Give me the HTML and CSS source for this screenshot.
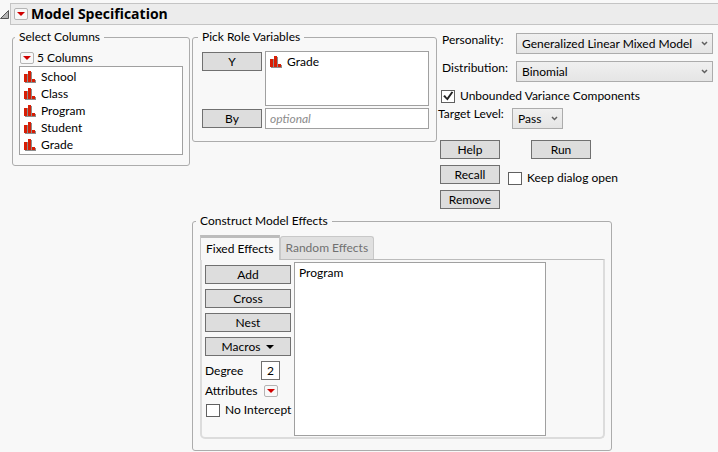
FILE: index.html
```html
<!DOCTYPE html>
<html lang="en">
<head>
    <meta charset="UTF-8">
    <meta name="viewport" content="width=device-width, initial-scale=1.0">
    <title>Model Specification</title>
    <link rel="stylesheet" href="styles.css">
</head>
<body>

<!-- Shared icons -->
<svg class="icon-defs" aria-hidden="true">
    <symbol id="nominal" viewBox="0 0 12 12">
        <path fill="#8c8c8c" d="M1 3h3v8H1zM5 1h3v11H5zM9 9h3v3H9zM1 11h11v1H1z"/>
        <path fill="#d81e05" d="M0 3h3v8H0zM4 0h3v11H4zM8 8h3v3H8z"/>
    </symbol>
    <symbol id="triangle" viewBox="0 0 8 4">
        <path d="M0 0h8L4 4z"/>
    </symbol>
    <symbol id="chevron" viewBox="0 0 7 5">
        <path fill="none" stroke="#606060" stroke-width="1.5" d="M1 1l2.500 2.500L6 1"/>
    </symbol>
</svg>

<header class="title-bar">
    <svg class="disclosure" viewBox="0 0 9 9"><path fill="#b4b4b4" stroke="#555" d="M8.500 .5v8h-8z"/></svg>
    <div class="title">
        <button class="menu-btn" aria-label="Model options"><svg><use href="#triangle"/></svg></button>
        <h1>Model Specification</h1>
    </div>
</header>

<main class="dialog">
    <fieldset class="group columns">
        <legend>Select Columns</legend>
        <div class="columns-head">
            <button class="menu-btn" aria-label="Column options"><svg><use href="#triangle"/></svg></button>
            <span>5 Columns</span>
        </div>
        <ul class="list">
            <li><svg><use href="#nominal"/></svg>School</li>
            <li><svg><use href="#nominal"/></svg>Class</li>
            <li><svg><use href="#nominal"/></svg>Program</li>
            <li><svg><use href="#nominal"/></svg>Student</li>
            <li><svg><use href="#nominal"/></svg>Grade</li>
        </ul>
    </fieldset>

    <div class="workspace">
        <div class="top-row">
            <fieldset class="group roles">
                <legend>Pick Role Variables</legend>
                <button class="btn">Y</button>
                <ul class="list">
                    <li><svg><use href="#nominal"/></svg>Grade</li>
                </ul>
                <button class="btn by-btn">By</button>
                <input class="by-input" type="text" placeholder="optional" aria-label="By">
            </fieldset>

            <div class="options">
                <div class="settings">
                    <label for="personality">Personality:</label>
                    <div class="select">
                        <select id="personality"><option>Generalized Linear Mixed Model</option></select>
                        <svg><use href="#chevron"/></svg>
                    </div>
                    <label for="distribution">Distribution:</label>
                    <div class="select">
                        <select id="distribution"><option>Binomial</option></select>
                        <svg><use href="#chevron"/></svg>
                    </div>
                </div>
                <label class="check unbounded"><input type="checkbox" checked>Unbounded Variance Components</label>
                <div class="target">
                    <label for="target">Target Level:</label>
                    <div class="select">
                        <select id="target"><option>Pass</option></select>
                        <svg><use href="#chevron"/></svg>
                    </div>
                </div>
                <div class="actions">
                    <div class="action-col">
                        <button class="btn">Help</button>
                        <button class="btn">Recall</button>
                        <button class="btn">Remove</button>
                    </div>
                    <div class="run-col">
                        <button class="btn run">Run</button>
                        <label class="check"><input type="checkbox">Keep dialog open</label>
                    </div>
                </div>
            </div>
        </div>

        <fieldset class="group effects">
            <legend>Construct Model Effects</legend>
            <div class="tabs" role="tablist">
                <button class="tab active" role="tab" aria-selected="true">Fixed Effects</button>
                <button class="tab" role="tab" aria-selected="false">Random Effects</button>
            </div>
            <div class="tab-panel" role="tabpanel">
                <div class="effect-tools">
                    <button class="btn">Add</button>
                    <button class="btn">Cross</button>
                    <button class="btn">Nest</button>
                    <button class="btn macros">Macros <svg><use href="#triangle"/></svg></button>
                    <div class="tool-row">
                        <label for="degree">Degree</label>
                        <input id="degree" class="degree" type="text" value="2">
                    </div>
                    <div class="tool-row attributes">
                        <span>Attributes</span>
                        <button class="menu-btn" aria-label="Attributes"><svg><use href="#triangle"/></svg></button>
                    </div>
                    <label class="check"><input type="checkbox">No Intercept</label>
                </div>
                <ul class="list effect-list">
                    <li>Program</li>
                </ul>
            </div>
        </fieldset>
    </div>
</main>

</body>
</html>
```
FILE: styles.css
```css
* {
    box-sizing: border-box;
}
body {
    margin: 0;
    padding-top: 3px;
    background: #f8f8f8;
    color: #000;
    font-family: Lato, "Open Sans", sans-serif;
    font-size: 12px;
    line-height: 16px;
}
button, input, select {
    margin: 0;
    padding: 0;
    font: inherit;
    color: inherit;
}
svg {
    display: block;
    flex: none;
}
.icon-defs {
    display: none;
}

/* Title */
.title-bar {
    display: flex;
    align-items: center;
}
.disclosure {
    width: 9px;
    height: 9px;
    margin-right: 1px;
}
.title {
    display: flex;
    flex: 1;
    align-items: center;
    gap: 3px;
    height: 22px;
    padding-left: 3px;
    border: 1px solid #c4c4c4;
    border-right: none;
    background: #ececec;
}
h1 {
    margin: 0;
    font-family: "Open Sans", sans-serif;
    font-size: 14px;
    line-height: 20px;
}
.menu-btn {
    display: flex;
    align-items: center;
    justify-content: center;
    width: 14px;
    height: 12px;
    border: 1px solid #b4b4b4;
    border-radius: 2px;
    background: #f8f8f8;
    fill: #d00000;
}
.menu-btn svg {
    width: 8px;
    height: 4px;
}

/* Layout */
.dialog {
    display: flex;
    align-items: flex-start;
    gap: 2px;
    padding: 4px 4px 0 12px;
}
.workspace {
    flex: 1;
    min-width: 0;
}
.top-row {
    display: flex;
    align-items: flex-start;
}
.group {
    min-width: 0;
    margin: 0;
    border: 1px solid #acacac;
    border-radius: 3px;
}
legend {
    margin-left: -4px;
    padding: 0 4px;
}
.columns {
    width: 178px;
    padding: 5px 6px 10px;
}
.columns-head {
    display: flex;
    align-items: center;
    gap: 3px;
    padding-left: 1px;
}
.list {
    margin: 0;
    padding: 1px 4px;
    border: 1px solid #a0a0a0;
    background: #fff;
    list-style: none;
}
.list li {
    display: flex;
    align-items: center;
    gap: 5px;
    line-height: 17px;
}
.list svg {
    width: 12px;
    height: 12px;
}

/* Buttons and fields */
.btn {
    width: 60px;
    height: 19px;
    border: 1px solid #707070;
    background: #ddd;
    line-height: 17px;
}
.roles {
    display: grid;
    grid-template-columns: 60px 1fr;
    gap: 2px 3px;
    width: 245px;
    padding: 6px 7px 12px 9px;
}
.roles .btn {
    margin-top: 1px;
}
.roles .list {
    height: 55px;
}
.by-input {
    width: 100%;
    height: 21px;
    padding: 0 4px;
    border: 1px solid #a0a0a0;
    background: #fff;
}
.by-input::placeholder {
    color: #8c8c8c;
    font-style: italic;
}
.select {
    display: grid;
    align-items: center;
}
.select select {
    grid-area: 1 / 1;
    width: 100%;
    height: 21px;
    padding: 0 16px 0 5px;
    appearance: none;
    border: 1px solid #acacac;
    border-radius: 0;
    background: linear-gradient(#f0f0f0, #e5e5e5);
}
.select svg {
    grid-area: 1 / 1;
    justify-self: end;
    width: 7px;
    height: 5px;
    margin-right: 5px;
    pointer-events: none;
}
.check {
    display: flex;
    align-items: center;
    gap: 5px;
    white-space: nowrap;
}
.check input {
    flex: none;
    width: 14px;
    height: 13px;
    appearance: none;
    border: 1px solid #606060;
    background: #fff;
}
.check input:checked::before {
    content: "";
    display: block;
    width: 12px;
    height: 11px;
    background: #222;
    clip-path: polygon(10% 52%, 24% 42%, 42% 65%, 80% 8%, 94% 16%, 46% 92%);
}

/* Model options */
.options {
    flex: 1;
    padding: 4px 1px 0 1px;
}
.settings {
    display: grid;
    grid-template-columns: 71px 1fr;
    gap: 7px 3px;
    padding-left: 4px;
}
.settings label {
    line-height: 14px;
}
.unbounded {
    padding: 6px 0 0 3px;
}
.target {
    display: flex;
    align-items: flex-start;
    padding-top: 4px;
}
.target label {
    width: 74px;
    line-height: 12px;
}
.target .select {
    width: 51px;
}
.actions {
    display: flex;
    gap: 8px;
    padding: 11px 0 0 2px;
}
.action-col {
    display: flex;
    flex-direction: column;
    gap: 6px;
}
.run {
    margin: 0 0 11px 23px;
}

/* Model effects */
.effects {
    width: 420px;
    margin-top: 4px;
    padding: 6px 6px 11px 7px;
}
.tabs {
    display: flex;
    align-items: flex-end;
}
.tab {
    height: 23px;
    padding: 0 5px;
    border: 1px solid #c8c8c8;
    border-width: 1px 1px 0 1px;
    border-radius: 3px 3px 0 0;
    background: #e0e0e0;
    color: #707070;
    white-space: nowrap;
}
.tab.active {
    height: 25px;
    margin-bottom: -1px;
    border-top: 3px solid #bcbcbc;
    border-radius: 0;
    background: #f8f8f8;
    color: #000;
    z-index: 1;
}
.tab-panel {
    display: flex;
    gap: 3px;
    padding: 2px 57px 1px 3px;
    border: 2px solid #dcdcdc;
    border-top: 1px solid #bcbcbc;
    border-radius: 0 0 5px 5px;
}
.effect-tools {
    display: flex;
    flex-direction: column;
    gap: 5px;
    width: 86px;
    padding-top: 3px;
}
.effect-tools .btn {
    width: 100%;
}
.macros {
    display: flex;
    align-items: center;
    justify-content: center;
    gap: 6px;
}
.macros svg {
    width: 8px;
    height: 4px;
}
.tool-row {
    display: flex;
    align-items: center;
    gap: 7px;
    line-height: 12px;
}
.tool-row label {
    width: 49px;
}
.degree {
    width: 19px;
    height: 19px;
    border: 1px solid #707070;
    background: #fff;
    text-align: center;
}
.effect-tools .check {
    padding-left: 1px;
}
.effect-list {
    flex: 1;
    height: 174px;
}
```
